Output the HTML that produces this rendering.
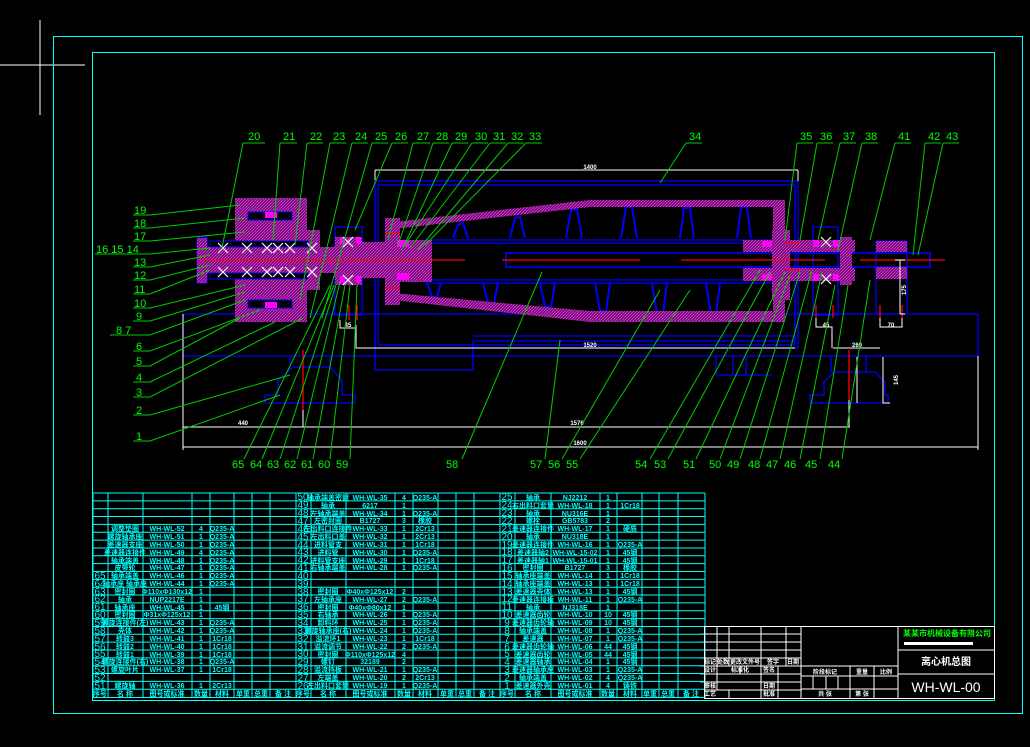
<!DOCTYPE html>
<html><head><meta charset="utf-8"><style>
html,body{margin:0;padding:0;background:#000;width:1030px;height:747px;overflow:hidden}
svg{display:block}
.t{font-family:"Liberation Sans","Noto Sans CJK SC",sans-serif;font-size:7px;font-weight:bold;fill:#00ffff;text-anchor:middle}
.n{font-family:"Liberation Sans",sans-serif;font-size:10px;fill:#00ffff;text-anchor:middle}
.g{font-family:"Liberation Sans",sans-serif;font-size:11px;fill:#00ff00}
.w{font-family:"Liberation Sans",sans-serif;font-size:6px;fill:#fff;font-weight:bold;text-anchor:middle}
.wt{font-family:"Liberation Sans","Noto Sans CJK SC",sans-serif;font-size:7px;fill:#fff;font-weight:bold;text-anchor:middle}
</style></head><body>
<svg width="1030" height="747" viewBox="0 0 1030 747" xmlns="http://www.w3.org/2000/svg">
<defs>
<pattern id="h" width="3" height="3" patternUnits="userSpaceOnUse">
<rect width="3" height="3" fill="#4a0a4a"/>
<path d="M0 3L3 0M-1 1L1 -1M2 4L4 2" stroke="#e830e8" stroke-width="1"/>
</pattern>
</defs>
<path d="M40 20V115M0 65H85" stroke="#fff" stroke-width="1"/>
<rect x="53.5" y="36.5" width="969" height="677" fill="none" stroke="#00ffff"/>
<rect x="92.5" y="52.5" width="902" height="648" fill="none" stroke="#00ffff"/>

<g fill="none" stroke="#0000ff" stroke-width="1.3">
<rect x="375" y="181" width="423" height="167"/>
<rect x="378" y="185" width="417" height="160"/>
<path d="M375 348V370H473V341"/>
<path d="M473 341H795M473 336H795"/>
<path d="M183 314H978V356H183Z"/>
<rect x="335" y="227" width="27" height="88"/>
<path d="M265 403V395H278V380L293 367H330L342 380V395H355V403Z"/>
<path d="M290 357V367M330 357V367"/>
<path d="M810 403V395H824V382L834 372H875L885 382V395H888V403Z"/>
<path d="M831 357V372M866 357V372"/>
<path d="M716 357V375M733 357V375M716 375H772M746 357V375"/>
<rect x="813" y="227" width="25" height="88"/>
<rect x="876" y="241" width="31" height="73"/>
<path d="M425 240H790M425 243H790M425 280H790M425 283H790"/>
<rect x="506" y="253" width="424" height="14" stroke-width="1.6"/>
<g stroke-width="2">
<path d="M453 238L458 225L463 223L468 238M510 238L515 218L520 217L525 238M566 238L571 210L577 209L582 238M621 238L626 207L632 207L637 238M680 238L684 208L690 208L694 238M737 238L741 207L747 207L751 238"/>
<path d="M427 283L432 297L437 297L441 283M483 283L488 303L494 303L498 283M540 283L545 307L551 307L555 283M595 283L600 311L606 311L610 283M652 283L657 314L663 314L667 283M706 283L711 314L716 314L720 283"/>
</g>
<rect x="197" y="237" width="10" height="46"/>
</g>
<g fill="url(#h)" stroke="none">
<path d="M393 222L590 200H785V322H773V207H590L393 229Z"/>
<path d="M393 293L590 311H785V322H590L393 300Z"/>
<path d="M385 218H400V305H385Z"/>
<path d="M400 240H432V282H400Z"/>
<path d="M235 198H307V322H235Z"/>
<path d="M197 247H425V273H197Z"/>
<path d="M197 238H207V283H197Z"/>
<path d="M335 237H362V250H335ZM335 271H362V285H335Z"/>
<path d="M300 230H320V290H300Z"/>
<path d="M362 242H400V278H362Z"/>
<path d="M743 240H855V252H743ZM743 268H855V281H743Z"/>
<path d="M772 230H790V300H772Z"/>
<path d="M876 241H907V252H876ZM876 267H907V279H876Z"/>
<path d="M840 237H852V285H840Z"/>
</g>
<g fill="#000" stroke="#0000ff">
<rect x="248" y="212" width="44" height="8"/>
<rect x="248" y="300" width="44" height="8"/>
<rect x="210" y="241" width="98" height="6"/>
<rect x="210" y="273" width="98" height="6"/>
</g>
<g fill="#ff00ff">
<rect x="265" y="212" width="12" height="6"/>
<rect x="265" y="302" width="12" height="6"/>
<rect x="397" y="240" width="12" height="7"/>
<rect x="397" y="273" width="12" height="7"/>
<rect x="762" y="241" width="10" height="6"/>
<rect x="762" y="274" width="10" height="6"/>
<rect x="813" y="240" width="6" height="7"/><rect x="833" y="240" width="6" height="7"/>
<rect x="813" y="274" width="6" height="7"/><rect x="833" y="274" width="6" height="7"/>
<rect x="340" y="237" width="5" height="7"/><rect x="356" y="237" width="5" height="7"/>
<rect x="340" y="276" width="5" height="7"/><rect x="356" y="276" width="5" height="7"/>
</g>
<g stroke="#fff" stroke-width="1.2">
<path d="M218 243l10 10m0-10l-10 10M242 243l10 10m0-10l-10 10M262 243l10 10m0-10l-10 10M273 243l10 10m0-10l-10 10M285 243l10 10m0-10l-10 10M307 243l10 10m0-10l-10 10M343 237l10 10m0-10l-10 10"/>
<path d="M218 267l10 10m0-10l-10 10M242 267l10 10m0-10l-10 10M262 267l10 10m0-10l-10 10M273 267l10 10m0-10l-10 10M285 267l10 10m0-10l-10 10M307 267l10 10m0-10l-10 10M343 275l10 10m0-10l-10 10"/>
<path d="M821 237l10 10m0-10l-10 10M821 274l10 10m0-10l-10 10"/>
</g>
<g stroke="#ff0000" stroke-width="1.3">
<path d="M200 260H465M502 260H640M681 260H825M860 260H945"/>
<path d="M303 350V410M349 305V320M357 305V320M816 305V318M833 305V318M880 305V318M902 305V318M849 350V400"/>
<path d="M385 233H400M385 288H400M785 243H800M785 270H800"/>
</g>
<g stroke="#fff" stroke-width="1" fill="none">
<path d="M375 170H798M375 170V180M798 170V181"/>
<path d="M183 314V450M183 427H850M183 447H978M978 356V450M303 410V427M849 400V427"/>
<path d="M356 325V348H795M340 320V328H356M816 318V327H832V348M833 348H880M880 318V327H902V318M900 260V314M895 260H905M900 314H905M883 357V403H890"/>
<path d="M857 357V403"/>
</g>
<g class="w">
<text x="590" y="169">1400</text><text x="590" y="347">1520</text>
<text x="577" y="425">1576</text><text x="580" y="445">1600</text>
<text x="243" y="425">440</text><text x="348" y="327">45</text>
<text x="826" y="327">45</text><text x="891" y="327">70</text>
<text x="857" y="347">260</text>
<text x="0" y="0" transform="translate(906 290) rotate(-90)">175</text>
<text x="0" y="0" transform="translate(898 380) rotate(-90)">145</text>
</g>
<g stroke="#00cc00" stroke-width="1" fill="none">
<path d="M243 143H265M243 143L222 248"/>
<path d="M280 143H297M280 143L273 240"/>
<path d="M307 143H323M307 143L295 245"/>
<path d="M330 143H346M330 143L300 300"/>
<path d="M352 143H368M352 143L310 318"/>
<path d="M372 143H388M372 143L322 318"/>
<path d="M392 143H408M392 143L355 230"/>
<path d="M413 143H430M413 143L388 240"/>
<path d="M433 143H449M433 143L398 245"/>
<path d="M452 143H468M452 143L402 250"/>
<path d="M472 143H488M472 143L405 245"/>
<path d="M490 143H506M490 143L410 248"/>
<path d="M508 143H524M508 143L418 250"/>
<path d="M526 143H542M526 143L425 245"/>
<path d="M686 143H702M686 143L660 183"/>
<path d="M797 143H813M797 143L785 240"/>
<path d="M817 143H833M817 143L800 240"/>
<path d="M840 143H856M840 143L818 240"/>
<path d="M862 143H878M862 143L838 250"/>
<path d="M895 143H911M895 143L870 240"/>
<path d="M925 143H941M925 143L913 255"/>
<path d="M943 143H959M943 143L918 255"/>
<path d="M133 215H150L240 205M133 228H150L245 218M133 241H150L245 232M95 254H150L210 248M133 267H150L210 255M133 280H150L210 265M133 294H150L210 270M133 308H150L245 285M133 321H150L245 292M110 335H150L245 300M133 351H150L260 310M133 366H150L240 318M133 382H150L275 322M133 397H150L303 318M133 415H150L290 375M133 441H150L280 395"/>
<path d="M244 459L330 285M262 459L334 285M280 459L336 285M297 459L340 282M313 459L345 285M330 459L350 285M350 459L357 285M462 459L542 272M545 459L560 340M562 459L660 290M580 459L690 290M650 459L760 270M668 459L770 272M696 459L785 272M720 459L790 275M740 459L800 272M760 459L812 270M780 459L822 272M800 459L835 285M820 459L848 285M842 459L870 280"/>
</g>
<g class="g">
<text x="248" y="140">20</text><text x="283" y="140">21</text><text x="310" y="140">22</text><text x="333" y="140">23</text><text x="355" y="140">24</text><text x="375" y="140">25</text><text x="395" y="140">26</text><text x="417" y="140">27</text><text x="436" y="140">28</text><text x="455" y="140">29</text><text x="475" y="140">30</text><text x="493" y="140">31</text><text x="511" y="140">32</text><text x="529" y="140">33</text><text x="689" y="140">34</text><text x="800" y="140">35</text><text x="820" y="140">36</text><text x="843" y="140">37</text><text x="865" y="140">38</text><text x="898" y="140">41</text><text x="928" y="140">42</text><text x="946" y="140">43</text>
<text x="134" y="214">19</text><text x="134" y="227">18</text><text x="134" y="240">17</text><text x="96" y="253">16 15 14</text><text x="134" y="266">13</text><text x="134" y="279">12</text><text x="134" y="293">11</text><text x="134" y="307">10</text><text x="136" y="320">9</text><text x="116" y="334">8   7</text><text x="136" y="350">6</text><text x="136" y="365">5</text><text x="136" y="381">4</text><text x="136" y="396">3</text><text x="136" y="414">2</text><text x="136" y="440">1</text>
<text x="232" y="468">65</text><text x="250" y="468">64</text><text x="267" y="468">63</text><text x="284" y="468">62</text><text x="301" y="468">61</text><text x="318" y="468">60</text><text x="336" y="468">59</text><text x="446" y="468">58</text><text x="530" y="468">57</text><text x="548" y="468">56</text><text x="566" y="468">55</text><text x="635" y="468">54</text><text x="654" y="468">53</text><text x="683" y="468">51</text><text x="709" y="468">50</text><text x="727" y="468">49</text><text x="748" y="468">48</text><text x="766" y="468">47</text><text x="784" y="468">46</text><text x="805" y="468">45</text><text x="828" y="468">44</text>
</g>

<g stroke="#00ffff" stroke-width="1" fill="none">
<path d="M93 493H705M93 500.85H705M93 508.7H705M93 516.55H705M93 524.4H705M93 532.25H705M93 540.1H705M93 547.95H705M93 555.8H705M93 563.65H705M93 571.5H705M93 579.35H705M93 587.2H705M93 595.05H705M93 602.9H705M93 610.75H705M93 618.6H705M93 626.45H705M93 634.3H705M93 642.15H705M93 650H705M93 657.85H705M93 665.7H705M93 673.55H705M93 681.4H705M93 689.25H705M93 697.5H705"/>
<path d="M93 493V698M108 493V698M143 493V698M192 493V698M210 493V698M234 493V698M252 493V698M270 493V698M296 493V698M311 493V698M346 493V698M395 493V698M413 493V698M438 493V698M456 493V698M474 493V698M500 493V698M515 493V698M551 493V698M600 493V698M617 493V698M642 493V698M659 493V698M678 493V698M705 493V698"/>
</g>
<g class="t">
<text x="125" y="531">调整垫圈</text><text x="167" y="531">WH-WL-52</text><text x="201" y="531">4</text><text x="222" y="531">Q235-A</text>
<text x="125" y="539">螺旋轴承座</text><text x="167" y="539">WH-WL-51</text><text x="201" y="539">1</text><text x="222" y="539">Q235-A</text>
<text x="125" y="547">差速器支座</text><text x="167" y="547">WH-WL-50</text><text x="201" y="547">1</text><text x="222" y="547">Q235-A</text>
<text x="125" y="555">差速器连接件</text><text x="167" y="555">WH-WL-49</text><text x="201" y="555">4</text><text x="222" y="555">Q235-A</text>
<text x="125" y="563">轴承端盖</text><text x="167" y="563">WH-WL-48</text><text x="201" y="563">1</text><text x="222" y="563">Q235-A</text>
<text x="125" y="570">皮带轮</text><text x="167" y="570">WH-WL-47</text><text x="201" y="570">1</text><text x="222" y="570">Q235-A</text>
<text x="125" y="578">轴承端盖</text><text x="167" y="578">WH-WL-46</text><text x="201" y="578">1</text><text x="222" y="578">Q235-A</text>
<text x="125" y="586">轴承座 轴承座</text><text x="167" y="586">WH-WL-44</text><text x="201" y="586">1</text><text x="222" y="586">Q235-A</text>
<text x="125" y="594">密封圈</text><text x="167" y="594">Φ110xΦ130x12</text><text x="201" y="594">1</text>
<text x="125" y="602">轴承</text><text x="167" y="602">NUP2217E</text><text x="201" y="602">1</text>
<text x="125" y="610">轴承座</text><text x="167" y="610">WH-WL-45</text><text x="201" y="610">1</text><text x="222" y="610">45钢</text>
<text x="125" y="617">密封圈</text><text x="167" y="617">Φ31xΦ125x12</text><text x="201" y="617">1</text>
<text x="125" y="625">螺旋连接件(左)</text><text x="167" y="625">WH-WL-43</text><text x="201" y="625">1</text><text x="222" y="625">Q235-A</text>
<text x="125" y="633">壳体</text><text x="167" y="633">WH-WL-42</text><text x="201" y="633">1</text><text x="222" y="633">Q235-A</text>
<text x="125" y="641">转鼓3</text><text x="167" y="641">WH-WL-41</text><text x="201" y="641">1</text><text x="222" y="641">1Cr18</text>
<text x="125" y="649">转鼓2</text><text x="167" y="649">WH-WL-40</text><text x="201" y="649">1</text><text x="222" y="649">1Cr18</text>
<text x="125" y="657">转鼓1</text><text x="167" y="657">WH-WL-39</text><text x="201" y="657">1</text><text x="222" y="657">1Cr18</text>
<text x="125" y="664">螺旋连接件(右)</text><text x="167" y="664">WH-WL-38</text><text x="201" y="664">1</text><text x="222" y="664">Q235-A</text>
<text x="125" y="672">螺旋叶片</text><text x="167" y="672">WH-WL-37</text><text x="201" y="672">1</text><text x="222" y="672">1Cr18</text>
<text x="125" y="688">螺旋轴</text><text x="167" y="688">WH-WL-36</text><text x="201" y="688">1</text><text x="222" y="688">2Cr13</text>
<text x="328" y="500">轴承端盖密封</text><text x="370" y="500">WH-WL-35</text><text x="404" y="500">4</text><text x="425" y="500">Q235-A</text>
<text x="328" y="508">轴承</text><text x="370" y="508">6217</text><text x="404" y="508">1</text>
<text x="328" y="516">左轴承端盖</text><text x="370" y="516">WH-WL-34</text><text x="404" y="516">1</text><text x="425" y="516">Q235-A</text>
<text x="328" y="523">左密封圈</text><text x="370" y="523">B1727</text><text x="404" y="523">3</text><text x="425" y="523">橡胶</text>
<text x="328" y="531">左出料口连接件</text><text x="370" y="531">WH-WL-33</text><text x="404" y="531">1</text><text x="425" y="531">2Cr13</text>
<text x="328" y="539">左出料口盖</text><text x="370" y="539">WH-WL-32</text><text x="404" y="539">1</text><text x="425" y="539">2Cr13</text>
<text x="328" y="547">进料管支</text><text x="370" y="547">WH-WL-31</text><text x="404" y="547">1</text><text x="425" y="547">1Cr18</text>
<text x="328" y="555">进料管</text><text x="370" y="555">WH-WL-30</text><text x="404" y="555">1</text><text x="425" y="555">Q235-A</text>
<text x="328" y="563">进料管支座</text><text x="370" y="563">WH-WL-29</text><text x="404" y="563">1</text><text x="425" y="563">1Cr18</text>
<text x="328" y="570">右轴承端盖</text><text x="370" y="570">WH-WL-28</text><text x="404" y="570">1</text><text x="425" y="570">Q235-A</text>
<text x="328" y="594">密封圈</text><text x="370" y="594">Φ40xΦ125x12</text><text x="404" y="594">2</text>
<text x="328" y="602">左轴承座</text><text x="370" y="602">WH-WL-27</text><text x="404" y="602">2</text><text x="425" y="602">Q235-A</text>
<text x="328" y="610">密封圈</text><text x="370" y="610">Φ40xΦ80x12</text><text x="404" y="610">1</text>
<text x="328" y="617">右轴承</text><text x="370" y="617">WH-WL-26</text><text x="404" y="617">1</text><text x="425" y="617">Q235-A</text>
<text x="328" y="625">卸料环</text><text x="370" y="625">WH-WL-25</text><text x="404" y="625">1</text><text x="425" y="625">Q235-A</text>
<text x="328" y="633">螺旋轴承座(右)</text><text x="370" y="633">WH-WL-24</text><text x="404" y="633">1</text><text x="425" y="633">Q235-A</text>
<text x="328" y="641">溢流环1</text><text x="370" y="641">WH-WL-23</text><text x="404" y="641">1</text><text x="425" y="641">1Cr18</text>
<text x="328" y="649">溢流调节</text><text x="370" y="649">WH-WL-22</text><text x="404" y="649">2</text><text x="425" y="649">Q235-A</text>
<text x="328" y="657">密封圈</text><text x="370" y="657">Φ110xΦ125x12</text><text x="404" y="657">4</text>
<text x="328" y="664">螺钉</text><text x="370" y="664">32189</text><text x="404" y="664">2</text>
<text x="328" y="672">溢流挡板</text><text x="370" y="672">WH-WL-21</text><text x="404" y="672">1</text><text x="425" y="672">Q235-A</text>
<text x="328" y="680">左端盖</text><text x="370" y="680">WH-WL-20</text><text x="404" y="680">2</text><text x="425" y="680">2Cr13</text>
<text x="328" y="688">左出料口套筒</text><text x="370" y="688">WH-WL-19</text><text x="404" y="688">1</text><text x="425" y="688">Q235-A</text>
<text x="533" y="500">轴承</text><text x="575" y="500">NJ2212</text><text x="608" y="500">1</text>
<text x="533" y="508">右出料口套筒</text><text x="575" y="508">WH-WL-18</text><text x="608" y="508">1</text><text x="630" y="508">1Cr18</text>
<text x="533" y="516">轴承</text><text x="575" y="516">NU316E</text><text x="608" y="516">1</text>
<text x="533" y="523">螺栓</text><text x="575" y="523">GB5783</text><text x="608" y="523">2</text>
<text x="533" y="531">差速器连接件</text><text x="575" y="531">WH-WL-17</text><text x="608" y="531">1</text><text x="630" y="531">硬质</text>
<text x="533" y="539">轴承</text><text x="575" y="539">NU318E</text><text x="608" y="539">1</text>
<text x="533" y="547">差速器连接件</text><text x="575" y="547">WH-WL-16</text><text x="608" y="547">1</text><text x="630" y="547">Q235-A</text>
<text x="533" y="555">差速器轴2</text><text x="575" y="555">WH-WL-15-02</text><text x="608" y="555">1</text><text x="630" y="555">45钢</text>
<text x="533" y="563">差速器轴1</text><text x="575" y="563">WH-WL-15-01</text><text x="608" y="563">1</text><text x="630" y="563">45钢</text>
<text x="533" y="570">密封圈</text><text x="575" y="570">B1727</text><text x="608" y="570">3</text><text x="630" y="570">橡胶</text>
<text x="533" y="578">轴承座端盖</text><text x="575" y="578">WH-WL-14</text><text x="608" y="578">1</text><text x="630" y="578">1Cr18</text>
<text x="533" y="586">轴承座端盖</text><text x="575" y="586">WH-WL-13</text><text x="608" y="586">1</text><text x="630" y="586">1Cr18</text>
<text x="533" y="594">差速器壳体</text><text x="575" y="594">WH-WL-13</text><text x="608" y="594">1</text><text x="630" y="594">45钢</text>
<text x="533" y="602">差速器连接板</text><text x="575" y="602">WH-WL-11</text><text x="608" y="602">1</text><text x="630" y="602">Q235-A</text>
<text x="533" y="610">轴承</text><text x="575" y="610">NJ318E</text><text x="608" y="610">1</text>
<text x="533" y="617">差速器齿轮</text><text x="575" y="617">WH-WL-10</text><text x="608" y="617">10</text><text x="630" y="617">45钢</text>
<text x="533" y="625">差速器齿轮轴</text><text x="575" y="625">WH-WL-09</text><text x="608" y="625">10</text><text x="630" y="625">45钢</text>
<text x="533" y="633">轴承端盖</text><text x="575" y="633">WH-WL-08</text><text x="608" y="633">1</text><text x="630" y="633">Q235-A</text>
<text x="533" y="641">差速器</text><text x="575" y="641">WH-WL-07</text><text x="608" y="641">1</text><text x="630" y="641">Q235-A</text>
<text x="533" y="649">差速器齿轮轴</text><text x="575" y="649">WH-WL-06</text><text x="608" y="649">44</text><text x="630" y="649">45钢</text>
<text x="533" y="657">差速器齿轮</text><text x="575" y="657">WH-WL-05</text><text x="608" y="657">44</text><text x="630" y="657">45钢</text>
<text x="533" y="664">差速器轴承</text><text x="575" y="664">WH-WL-04</text><text x="608" y="664">1</text><text x="630" y="664">45钢</text>
<text x="533" y="672">差速器轴承座</text><text x="575" y="672">WH-WL-03</text><text x="608" y="672">1</text><text x="630" y="672">Q235-A</text>
<text x="533" y="680">轴承端盖</text><text x="575" y="680">WH-WL-02</text><text x="608" y="680">4</text><text x="630" y="680">Q235-A</text>
<text x="533" y="688">差速器外壳</text><text x="575" y="688">WH-WL-01</text><text x="608" y="688">4</text><text x="630" y="688">铸铁</text>
<text x="100" y="696">序号</text><text x="125" y="696">名 称</text><text x="167" y="696">图号或标准</text><text x="201" y="696">数量</text><text x="222" y="696">材料</text><text x="243" y="696">单重</text><text x="261" y="696">总重</text><text x="283" y="696">备 注</text>
<text x="303" y="696">序号</text><text x="328" y="696">名 称</text><text x="370" y="696">图号或标准</text><text x="404" y="696">数量</text><text x="425" y="696">材料</text><text x="447" y="696">单重</text><text x="465" y="696">总重</text><text x="487" y="696">备 注</text>
<text x="507" y="696">序号</text><text x="533" y="696">名 称</text><text x="575" y="696">图号或标准</text><text x="608" y="696">数量</text><text x="630" y="696">材料</text><text x="650" y="696">单重</text><text x="668" y="696">总重</text><text x="691" y="696">备 注</text>
</g>
<g class="n">
<text x="100" y="579">65</text><text x="100" y="587">64</text><text x="100" y="595">63</text><text x="100" y="602">62</text><text x="100" y="610">61</text><text x="100" y="618">60</text><text x="100" y="626">59</text><text x="100" y="634">58</text><text x="100" y="642">57</text><text x="100" y="650">56</text><text x="100" y="657">55</text><text x="100" y="665">54</text><text x="100" y="673">53</text><text x="100" y="681">52</text><text x="100" y="689">51</text>
<text x="303" y="500">50</text><text x="303" y="508">49</text><text x="303" y="516">48</text><text x="303" y="524">47</text><text x="303" y="532">46</text><text x="303" y="540">45</text><text x="303" y="548">44</text><text x="303" y="555">43</text><text x="303" y="563">42</text><text x="303" y="571">41</text><text x="303" y="579">40</text><text x="303" y="587">39</text><text x="303" y="595">38</text><text x="303" y="602">37</text><text x="303" y="610">36</text><text x="303" y="618">35</text><text x="303" y="626">34</text><text x="303" y="634">33</text><text x="303" y="642">32</text><text x="303" y="650">31</text><text x="303" y="657">30</text><text x="303" y="665">29</text><text x="303" y="673">28</text><text x="303" y="681">27</text><text x="303" y="689">26</text>
<text x="507" y="500">25</text><text x="507" y="508">24</text><text x="507" y="516">23</text><text x="507" y="524">22</text><text x="507" y="532">21</text><text x="507" y="540">20</text><text x="507" y="548">19</text><text x="507" y="555">18</text><text x="507" y="563">17</text><text x="507" y="571">16</text><text x="507" y="579">15</text><text x="507" y="587">14</text><text x="507" y="595">13</text><text x="507" y="602">12</text><text x="507" y="610">11</text><text x="507" y="618">10</text><text x="507" y="626">9</text><text x="507" y="634">8</text><text x="507" y="642">7</text><text x="507" y="650">6</text><text x="507" y="657">5</text><text x="507" y="665">4</text><text x="507" y="673">3</text><text x="507" y="681">2</text><text x="507" y="689">1</text>
</g>

<g stroke="#fff" stroke-width="1" fill="none">
<rect x="704.5" y="626.5" width="290" height="72"/>
<path d="M704 634H801M704 642H801M704 650H801M704 658H801M704 666H898M704 674H801M704 682H801M704 690H801"/>
<path d="M717 626V666M729 626V666M761 626V666M786 626V666M801 626V698"/>
<path d="M717 666V690M761 666V698M729 690V698M740 666V674M778 666V698"/>
<path d="M898 626V698M898 650H995M898 674H995M801 676H898M801 689H898M850 666V698M874 666V698M813 676V689M826 676V689M838 676V689"/>
</g>
<g stroke="#00ffff"><path d="M700 634H704M700 642H704M700 650H704M700 658H704M700 666H704M700 674H704M700 682H704"/></g>
<g class="wt" style="font-size:6px">
<text x="710" y="664">标记</text><text x="723" y="664">处数</text><text x="745" y="664">更改文件号</text><text x="773" y="664">签字</text><text x="793" y="664">日期</text>
<text x="710" y="672">设计</text><text x="740" y="672">标准化</text><text x="769" y="672">签名</text>
<text x="710" y="688">审核</text><text x="769" y="688">日期</text>
<text x="710" y="696">工艺</text><text x="769" y="696">批准</text>
<text x="825" y="674">阶段标记</text><text x="862" y="674">重量</text><text x="886" y="674">比例</text>
<text x="825" y="696">共 张</text><text x="862" y="696">第 张</text>
</g>
<text x="903" y="636" style="font-family:'Liberation Sans','Noto Sans CJK SC',sans-serif;font-size:8px;font-weight:bold;fill:#00ff00">某某市机械设备有限公司</text>
<rect x="904" y="642" width="69" height="3" fill="#fff"/>
<text x="946" y="665" class="wt" style="font-size:10px">离心机总图</text>
<text x="946" y="692" style="font-family:'Liberation Sans',sans-serif;font-size:14px;fill:#fff;text-anchor:middle">WH-WL-00</text>
</svg>
</body></html>
